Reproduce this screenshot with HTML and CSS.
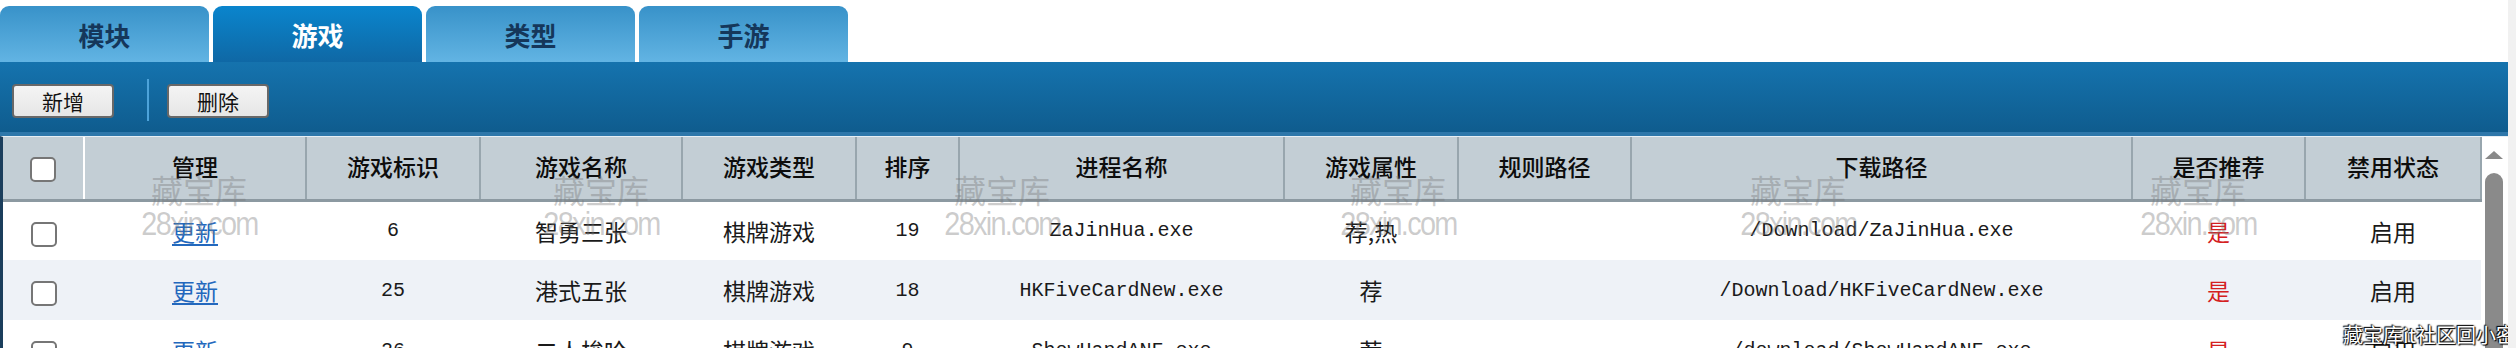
FILE: index.html
```html
<!DOCTYPE html>
<html lang="zh-CN">
<head>
<meta charset="utf-8">
<title>游戏管理</title>
<link rel="stylesheet" href="styles.css">
</head>
<body>
<div class="page">
  <div class="tabs">
    <div class="tab">模块</div>
    <div class="tab active">游戏</div>
    <div class="tab">类型</div>
    <div class="tab">手游</div>
  </div>
  <div class="toolbar">
    <button class="btn">新增</button>
    <span class="sep"></span>
    <button class="btn">删除</button>
  </div>
  <div class="grid-box">
    <table class="grid">
      <colgroup>
        <col class="c-cb"><col class="c-op"><col class="c-id"><col class="c-name"><col class="c-type"><col class="c-sort"><col class="c-proc"><col class="c-attr"><col class="c-rule"><col class="c-dl"><col class="c-rec"><col class="c-state">
      </colgroup>
      <thead>
        <tr>
          <th class="cb-cell"><span class="cb"></span></th>
          <th>管理</th>
          <th>游戏标识</th>
          <th>游戏名称</th>
          <th>游戏类型</th>
          <th>排序</th>
          <th>进程名称</th>
          <th>游戏属性</th>
          <th>规则路径</th>
          <th>下载路径</th>
          <th>是否推荐</th>
          <th>禁用状态</th>
        </tr>
      </thead>
      <tbody>
        <tr>
          <td><span class="cb"></span></td>
          <td><a class="link" href="#">更新</a></td>
          <td class="mono">6</td>
          <td>智勇三张</td>
          <td>棋牌游戏</td>
          <td class="mono">19</td>
          <td class="mono">ZaJinHua.exe</td>
          <td>荐,热</td>
          <td></td>
          <td class="mono">/Download/ZaJinHua.exe</td>
          <td class="yes">是</td>
          <td>启用</td>
        </tr>
        <tr class="alt">
          <td><span class="cb"></span></td>
          <td><a class="link" href="#">更新</a></td>
          <td class="mono">25</td>
          <td>港式五张</td>
          <td>棋牌游戏</td>
          <td class="mono">18</td>
          <td class="mono">HKFiveCardNew.exe</td>
          <td>荐</td>
          <td></td>
          <td class="mono">/Download/HKFiveCardNew.exe</td>
          <td class="yes">是</td>
          <td>启用</td>
        </tr>
        <tr>
          <td><span class="cb"></span></td>
          <td><a class="link" href="#">更新</a></td>
          <td class="mono">26</td>
          <td>二人梭哈</td>
          <td>棋牌游戏</td>
          <td class="mono">9</td>
          <td class="mono">ShowHandANF.exe</td>
          <td>荐</td>
          <td></td>
          <td class="mono">/download/ShowHandANF.exe</td>
          <td class="yes">是</td>
          <td>启用</td>
        </tr>
      </tbody>
    </table>
    <div class="vscroll">
      <span class="arrow-up"></span>
      <span class="thumb"></span>
    </div>
  </div>

  <div class="wm" style="left:138px"><span class="wm-cn">藏宝库</span><span class="wm-en">28xin.com</span></div>
  <div class="wm" style="left:540px"><span class="wm-cn">藏宝库</span><span class="wm-en">28xin.com</span></div>
  <div class="wm" style="left:941px"><span class="wm-cn">藏宝库</span><span class="wm-en">28xin.com</span></div>
  <div class="wm" style="left:1337px"><span class="wm-cn">藏宝库</span><span class="wm-en">28xin.com</span></div>
  <div class="wm" style="left:1737px"><span class="wm-cn">藏宝库</span><span class="wm-en">28xin.com</span></div>
  <div class="wm" style="left:2137px"><span class="wm-cn">藏宝库</span><span class="wm-en">28xin.com</span></div>
  <div class="wm-corner">藏宝库it社区回小密</div>
</div>
</body>
</html>
```
FILE: styles.css
```css
* { box-sizing: border-box; }

html, body {
  margin: 0;
  padding: 0;
}

body {
  background: #f1f1f1;
  font-family: "Noto Sans CJK SC", "Liberation Sans", sans-serif;
  color: #111;
  overflow: hidden;
}

.page {
  position: relative;
  width: 2508px;
  height: 348px;
  background: #fff;
  padding-top: 6px;
  overflow: hidden;
}

/* tabs */
.tabs {
  display: flex;
  gap: 4px;
  height: 56px;
}

.tab {
  width: 209px;
  height: 56px;
  border-radius: 9px 9px 0 0;
  background: linear-gradient(#3892c9, #62b4e3);
  color: #15375a;
  font-size: 26px;
  font-weight: 700;
  display: flex;
  align-items: center;
  justify-content: center;
}

.tab.active {
  background: linear-gradient(#0a85cd, #0f68a5);
  color: #fff;
}

/* toolbar */
.toolbar {
  height: 74px;
  background: linear-gradient(#1573ae, #0f5c8e);
  border-bottom: 4px solid #2e77aa;
  display: flex;
  align-items: flex-start;
  padding: 22px 0 0 12px;
}

.btn {
  width: 102px;
  height: 34px;
  background: linear-gradient(#f4f4f4, #e6e6e6);
  border: 2px solid #686868;
  border-radius: 4px;
  font-family: "Noto Sans CJK SC", sans-serif;
  font-size: 21px;
  line-height: 28px;
  color: #111;
  padding: 0;
}

.sep {
  width: 2px;
  height: 42px;
  margin: -5px 18px 0 33px;
  background: #4da3da;
}

/* grid */
.grid-box {
  display: flex;
  border-left: 3px solid #1b3e5c;
  border-top: 1px solid #e6eef4;
  height: 212px;
}

.grid {
  width: 2478px;
  flex: none;
  table-layout: fixed;
  border-collapse: collapse;
}

.c-cb { width: 81px; }
.c-op { width: 222px; }
.c-id { width: 174px; }
.c-name { width: 202px; }
.c-type { width: 174px; }
.c-sort { width: 103px; }
.c-proc { width: 325px; }
.c-attr { width: 174px; }
.c-rule { width: 173px; }
.c-dl { width: 501px; }
.c-rec { width: 173px; }
.c-state { width: 176px; }

.grid th {
  height: 63px;
  background: #c3ced5;
  border-right: 2px solid #98a6ae;
  border-bottom: 3px solid #8c99a1;
  font-size: 23px;
  font-weight: 500;
  color: #0d0d0d;
  text-align: center;
  padding: 0 0 4px;
}

.grid th.cb-cell {
  border-right-color: #fff;
}

.grid td {
  height: 60px;
  text-align: center;
  font-size: 23px;
  color: #1a1a1a;
  padding: 0;
  white-space: nowrap;
}

.grid tr.alt td {
  background: #eef2f7;
}

.grid td.mono {
  font-family: "Liberation Mono", monospace;
  font-size: 20px;
}

.grid td.yes {
  color: #d42020;
}

.link {
  color: #2368bd;
  text-decoration: underline;
  text-underline-offset: 3px;
}

.cb {
  display: inline-block;
  width: 26px;
  height: 25px;
  border: 2px solid #767676;
  border-radius: 5px;
  background: #fff;
  vertical-align: middle;
}

/* vertical scrollbar */
.vscroll {
  flex: 1;
  background: #fff;
  display: flex;
  flex-direction: column;
  align-items: center;
  padding: 14px 3px 0 0;
}

.arrow-up {
  width: 0;
  height: 0;
  border-left: 9px solid transparent;
  border-right: 9px solid transparent;
  border-bottom: 8px solid #8a8a8a;
}

.thumb {
  margin-top: 14px;
  width: 18px;
  flex: 1;
  background: #8a8a8a;
  border-radius: 9px 9px 0 0;
}

/* watermarks */
.wm {
  position: absolute;
  top: 171px;
  width: 122px;
  display: flex;
  flex-direction: column;
  align-items: center;
  pointer-events: none;
  color: rgba(120, 120, 120, 0.38);
}

.wm-cn {
  font-family: "Noto Sans CJK SC", sans-serif;
  font-size: 32px;
  line-height: 36px;
}

.wm-en {
  font-family: "Liberation Sans", sans-serif;
  font-size: 34px;
  line-height: 32px;
  letter-spacing: -2px;
  transform: scaleX(0.85);
}

.wm-corner {
  position: absolute;
  right: -8px;
  bottom: 2px;
  font-family: "Noto Sans CJK SC", sans-serif;
  font-size: 20px;
  line-height: 22px;
  color: #fff;
  text-shadow: 0 0 2px #000, 1px 1px 1px #000, -1px -1px 1px #000;
  pointer-events: none;
}
```
